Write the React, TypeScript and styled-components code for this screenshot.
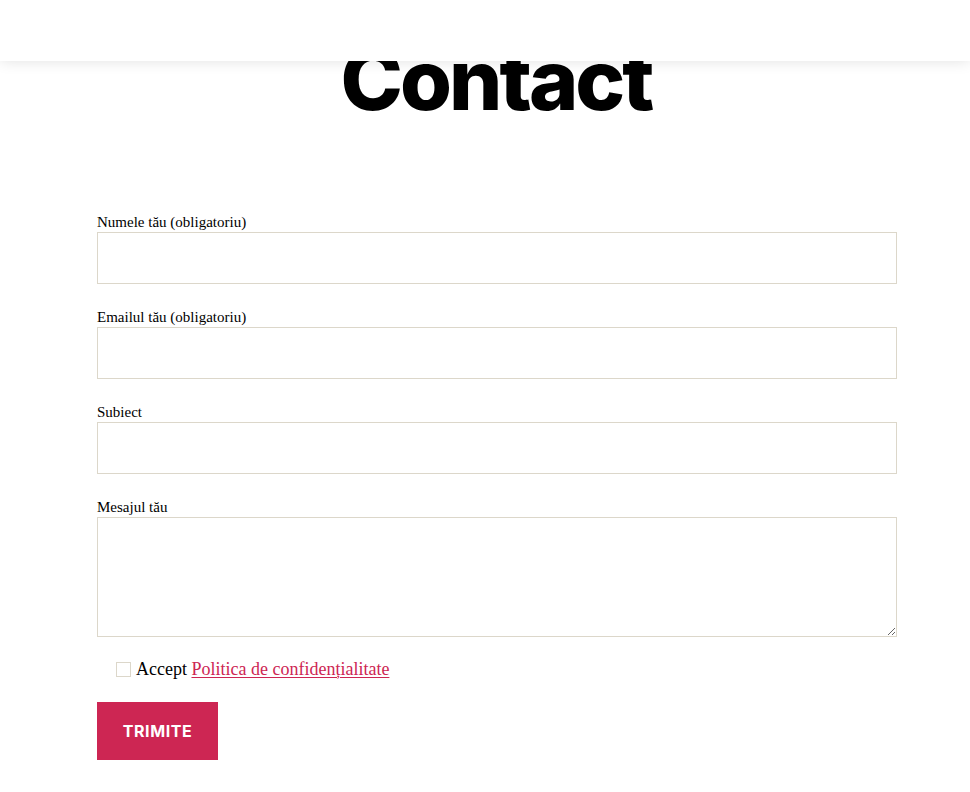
import React from "react";
import styled, { createGlobalStyle } from "styled-components";

const Global = createGlobalStyle`
  html, body { margin: 0; padding: 0; background: #fff; }
  body { font-family: "Liberation Serif", "Times New Roman", serif; color: #000; }
  * { box-sizing: border-box; }
`;

const Header = styled.header`
  position: fixed;
  top: 0;
  left: 0;
  right: 0;
  height: 61px;
  background: #fff;
  box-shadow: 0 0 14px rgba(0, 0, 0, 0.12);
  z-index: 10;
`;

const Page = styled.main`
  padding-top: 38px;
`;

const Title = styled.h1`
  margin: 0;
  text-align: center;
  font-family: Inter, "Liberation Sans", sans-serif;
  font-weight: 800;
  font-size: 84px;
  letter-spacing: -3px;
  line-height: 1;
  padding-left: 22px;
`;

const Form = styled.form`
  width: 800px;
  margin: 91px 0 0 97px;
  display: flex;
  flex-direction: column;
`;

const Field = styled.label`
  display: flex;
  flex-direction: column;
  font-size: 15px;
  line-height: 19px;
  margin-bottom: 24px;
`;

const Input = styled.input`
  display: block;
  width: 800px;
  height: 52px;
  border: 1px solid #dcd7ca;
  background: #fff;
  margin: 0;
  padding: 0 16px;
  font: inherit;
`;

const TextArea = styled.textarea`
  display: block;
  width: 800px;
  height: 120px;
  border: 1px solid #dcd7ca;
  background: #fff;
  margin: 0;
  padding: 12px 16px;
  font: inherit;
  resize: vertical;
`;

const AcceptRow = styled.div`
  display: flex;
  align-items: center;
  gap: 5px;
  padding-left: 19px;
  margin-top: -4px;
  font-size: 18px;
  line-height: 24px;
`;

const Check = styled.span`
  display: inline-block;
  width: 15px;
  height: 15px;
  border: 1px solid #dcd7ca;
  background: #fff;
`;

const Link = styled.a`
  color: #cd2653;
  text-decoration: underline;
  text-underline-offset: 2px;
  text-decoration-thickness: 1px;
`;

const Button = styled.button`
  margin-top: 21px;
  align-self: flex-start;
  width: 121px;
  height: 58px;
  border: none;
  background: #cd2653;
  color: #fff;
  font-family: Inter, "Liberation Sans", sans-serif;
  font-weight: 700;
  font-size: 16px;
  letter-spacing: 0.6px;
  text-transform: uppercase;
  cursor: pointer;
`;

export default function App() {
  const fields = [
    "Numele tău (obligatoriu)",
    "Emailul tău (obligatoriu)",
    "Subiect",
  ];
  return (
    <>
      <Global />
      <Header />
      <Page>
        <Title>Contact</Title>
        <Form onSubmit={(e) => e.preventDefault()}>
          {fields.map((f) => (
            <Field key={f}>
              {f}
              <Input type="text" />
            </Field>
          ))}
          <Field>
            Mesajul tău
            <TextArea />
          </Field>
          <AcceptRow>
            <Check />
            <span>
              Accept <Link href="#">Politica de confidențialitate</Link>
            </span>
          </AcceptRow>
          <Button type="submit">Trimite</Button>
        </Form>
      </Page>
    </>
  );
}
